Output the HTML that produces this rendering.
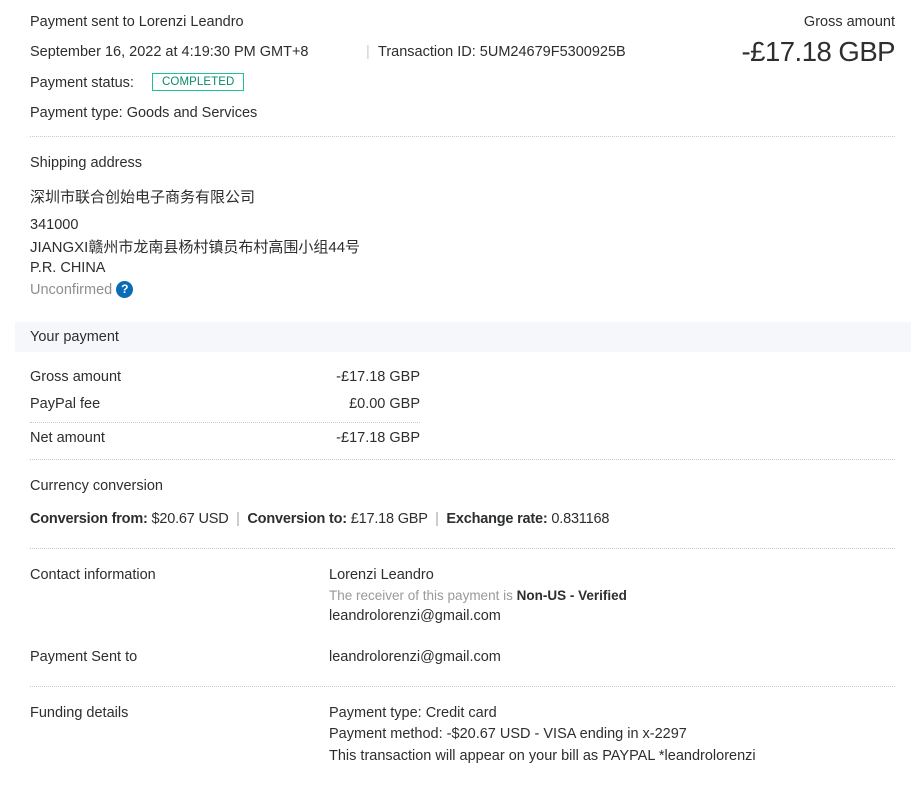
<!DOCTYPE html>
<html><head><meta charset="utf-8"><style>
body{margin:0;background:#fff;color:#2c2e2f;font-family:"Liberation Sans","Noto Sans CJK SC",sans-serif;font-size:14.5px;width:923px;height:785px;overflow:hidden;position:relative}
.a{position:absolute;white-space:nowrap}
.hr{position:absolute;left:30px;border-top:1px dotted #c8c8c8;height:0}
b{font-weight:bold}
.badge{border:1px solid #1ec095;color:#0b8a6a;font-size:11.5px;padding:2px 9px;letter-spacing:.1px}
.q{display:inline-block;width:17px;height:17px;border-radius:50%;background:#0a6cb6;color:#fff;font-size:12px;font-weight:bold;text-align:center;line-height:17px;vertical-align:1px}
</style></head><body>
<div class="a" style="left:30px;top:14px">Payment sent to Lorenzi Leandro</div>
<div class="a" style="left:30px;top:44px">September 16, 2022 at 4:19:30 PM GMT+8</div>
<div class="a" style="left:366px;top:44px;color:#ccc">|</div>
<div class="a" style="left:378px;top:44px">Transaction ID: 5UM24679F5300925B</div>
<div class="a" style="left:30px;top:75px">Payment status:</div>
<div class="a badge" style="left:152px;top:73px">COMPLETED</div>
<div class="a" style="left:30px;top:105px">Payment type: Goods and Services</div>
<div class="a" style="right:28px;top:14px">Gross amount</div>
<div class="a" style="right:28px;top:36px;font-size:27.5px;letter-spacing:-0.5px">-£17.18 GBP</div>
<div class="hr" style="top:136px;width:865px"></div>
<div class="a" style="left:30px;top:155px">Shipping address</div>
<div class="a" style="left:30px;top:186px;font-size:15px">深圳市联合创始电子商务有限公司</div>
<div class="a" style="left:30px;top:217px">341000</div>
<div class="a" style="left:30px;top:236px;font-size:15px">JIANGXI赣州市龙南县杨村镇员布村高围小组44号</div>
<div class="a" style="left:30px;top:260px">P.R. CHINA</div>
<div class="a" style="left:30px;top:281px;color:#8f8f8f">Unconfirmed <span class="q">?</span></div>
<div class="a" style="left:15px;top:322px;width:896px;height:30px;background:#f5f7fa"></div>
<div class="a" style="left:30px;top:329px">Your payment</div>
<div class="a" style="left:30px;top:369px">Gross amount</div>
<div class="a" style="left:30px;top:396px">PayPal fee</div>
<div class="a" style="left:30px;top:430px">Net amount</div>
<div class="a" style="right:503px;top:369px">-£17.18 GBP</div>
<div class="a" style="right:503px;top:396px">£0.00 GBP</div>
<div class="a" style="right:503px;top:430px">-£17.18 GBP</div>
<div class="hr" style="top:422px;width:390px"></div>
<div class="hr" style="top:459px;width:865px"></div>
<div class="a" style="left:30px;top:478px">Currency conversion</div>
<div class="a" style="left:30px;top:511px;letter-spacing:-0.2px"><b>Conversion from:</b> $20.67 USD <span style="color:#aaa">&nbsp;|&nbsp;</span> <b>Conversion to:</b> £17.18 GBP <span style="color:#aaa">&nbsp;|&nbsp;</span> <b>Exchange rate:</b> 0.831168</div>
<div class="hr" style="top:548px;width:865px"></div>
<div class="a" style="left:30px;top:567px">Contact information</div>
<div class="a" style="left:329px;top:567px">Lorenzi Leandro</div>
<div class="a" style="left:329px;top:588px;font-size:13.5px;color:#999">The receiver of this payment is <b style="color:#2c2e2f">Non-US - Verified</b></div>
<div class="a" style="left:329px;top:608px">leandrolorenzi@gmail.com</div>
<div class="a" style="left:30px;top:649px">Payment Sent to</div>
<div class="a" style="left:329px;top:649px">leandrolorenzi@gmail.com</div>
<div class="hr" style="top:686px;width:865px"></div>
<div class="a" style="left:30px;top:705px">Funding details</div>
<div class="a" style="left:329px;top:705px">Payment type: Credit card</div>
<div class="a" style="left:329px;top:726px">Payment method: -$20.67 USD - VISA ending in x-2297</div>
<div class="a" style="left:329px;top:748px">This transaction will appear on your bill as PAYPAL *leandrolorenzi</div>
</body></html>
